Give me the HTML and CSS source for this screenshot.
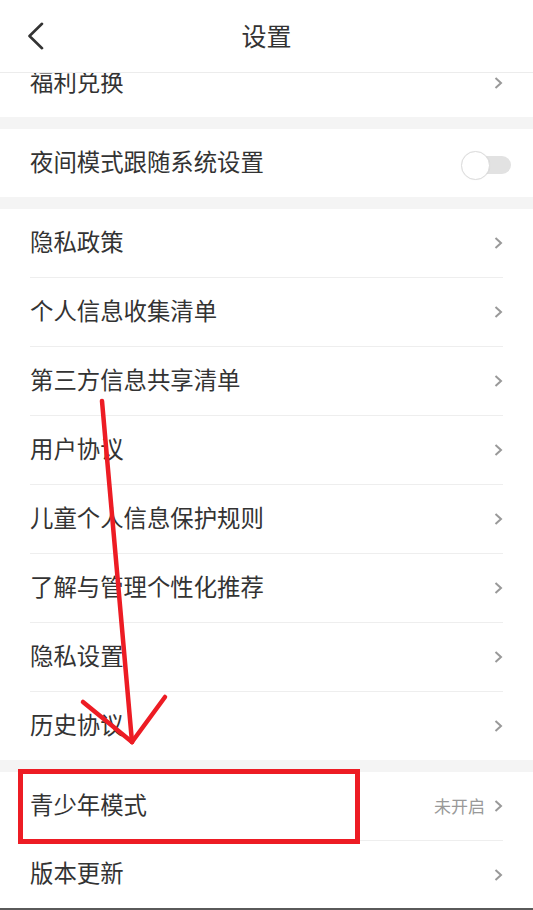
FILE: index.html
```html
<!DOCTYPE html>
<html lang="zh-CN">
<head>
<meta charset="utf-8">
<title>设置</title>
<link rel="stylesheet" href="styles.css">
</head>
<body>
<div class="screen">
  <header class="topbar">
    <svg class="back" width="18" height="28" viewBox="0 0 18 28"><polyline points="15,1.8 2.5,14 15,26.2" fill="none" stroke="#333" stroke-width="2.6" stroke-linecap="round" stroke-linejoin="round"/></svg>
    <h1 class="title">设置</h1>
  </header>

  <main class="content">
    <section class="group">
      <div class="row"><span class="label">福利兑换</span><span class="chev"><svg width="9" height="12" viewBox="0 0 9 12"><polyline points="1.5,1 7,6 1.5,11" fill="none" stroke="#999" stroke-width="2"/></svg></span></div>
    </section>

    <section class="group">
      <div class="row"><span class="label">夜间模式跟随系统设置</span><span class="switch"><span class="knob"></span></span></div>
    </section>

    <section class="group">
      <div class="row"><span class="label">隐私政策</span><span class="chev"><svg width="9" height="12" viewBox="0 0 9 12"><polyline points="1.5,1 7,6 1.5,11" fill="none" stroke="#999" stroke-width="2"/></svg></span></div>
      <div class="row"><span class="label">个人信息收集清单</span><span class="chev"><svg width="9" height="12" viewBox="0 0 9 12"><polyline points="1.5,1 7,6 1.5,11" fill="none" stroke="#999" stroke-width="2"/></svg></span></div>
      <div class="row"><span class="label">第三方信息共享清单</span><span class="chev"><svg width="9" height="12" viewBox="0 0 9 12"><polyline points="1.5,1 7,6 1.5,11" fill="none" stroke="#999" stroke-width="2"/></svg></span></div>
      <div class="row"><span class="label">用户协议</span><span class="chev"><svg width="9" height="12" viewBox="0 0 9 12"><polyline points="1.5,1 7,6 1.5,11" fill="none" stroke="#999" stroke-width="2"/></svg></span></div>
      <div class="row"><span class="label">儿童个人信息保护规则</span><span class="chev"><svg width="9" height="12" viewBox="0 0 9 12"><polyline points="1.5,1 7,6 1.5,11" fill="none" stroke="#999" stroke-width="2"/></svg></span></div>
      <div class="row"><span class="label">了解与管理个性化推荐</span><span class="chev"><svg width="9" height="12" viewBox="0 0 9 12"><polyline points="1.5,1 7,6 1.5,11" fill="none" stroke="#999" stroke-width="2"/></svg></span></div>
      <div class="row"><span class="label">隐私设置</span><span class="chev"><svg width="9" height="12" viewBox="0 0 9 12"><polyline points="1.5,1 7,6 1.5,11" fill="none" stroke="#999" stroke-width="2"/></svg></span></div>
      <div class="row"><span class="label">历史协议</span><span class="chev"><svg width="9" height="12" viewBox="0 0 9 12"><polyline points="1.5,1 7,6 1.5,11" fill="none" stroke="#999" stroke-width="2"/></svg></span></div>
    </section>

    <section class="group">
      <div class="row"><span class="label">青少年模式</span><span class="value">未开启</span><span class="chev"><svg width="9" height="12" viewBox="0 0 9 12"><polyline points="1.5,1 7,6 1.5,11" fill="none" stroke="#999" stroke-width="2"/></svg></span></div>
      <div class="row row-last"><span class="label">版本更新</span><span class="chev"><svg width="9" height="12" viewBox="0 0 9 12"><polyline points="1.5,1 7,6 1.5,11" fill="none" stroke="#999" stroke-width="2"/></svg></span></div>
    </section>
  </main>
  <div class="bottom-strip"></div>

  <svg class="annotation" width="533" height="910" viewBox="0 0 533 910">
    <g fill="none" stroke="#ed1c24" stroke-width="4.5" stroke-linecap="round">
      <line x1="102" y1="401" x2="132" y2="742"/>
      <line x1="83" y1="702" x2="132" y2="742"/>
      <line x1="165" y1="697" x2="132" y2="742"/>
    </g>
    <rect x="20.5" y="771.5" width="337" height="70" fill="none" stroke="#ed1c24" stroke-width="5"/>
  </svg>
</div>
</body>
</html>
```

FILE: styles.css
```css
html, body {
  margin: 0;
  padding: 0;
  background: #f4f4f4;
}

.screen {
  position: relative;
  width: 533px;
  height: 910px;
  overflow: hidden;
  background: #f4f4f4;
  font-family: "Noto Sans CJK SC", "Noto Sans", sans-serif;
  color: #333;
}

.topbar {
  position: absolute;
  top: 0;
  left: 0;
  right: 0;
  z-index: 2;
  height: 72px;
  border-bottom: 1px solid #ececec;
  background: #fff;
  display: flex;
  align-items: center;
  justify-content: center;
}

.back {
  position: absolute;
  left: 27px;
  top: 22px;
}

.title {
  margin: 0 0 2px;
  font-size: 25px;
  font-weight: normal;
  line-height: 1;
  color: #333;
}

.content {
  padding-top: 49px;
  display: flex;
  flex-direction: column;
  gap: 12px;
}

.group {
  background: #fff;
  display: flex;
  flex-direction: column;
}

.row {
  height: 68px;
  margin: 0 30px;
  display: flex;
  align-items: center;
}

.row + .row {
  border-top: 1px solid #eeeeee;
}

.row-last {
  height: 67px;
}

.label {
  flex: 1;
  font-size: 23.4px;
  line-height: 1;
  margin-bottom: 3px;
  color: #333;
}

.value {
  font-size: 17px;
  color: #999;
  margin-right: 9px;
  margin-bottom: 2px;
  line-height: 1;
}

.chev {
  display: flex;
  align-items: center;
  width: 9px;
  height: 12px;
}

.chev svg {
  display: block;
}

.switch {
  position: relative;
  width: 50px;
  height: 29px;
  margin-right: -8px;
  margin-top: 4px;
}

.switch::before {
  content: "";
  position: absolute;
  left: 5px;
  top: 5.5px;
  width: 45px;
  height: 18px;
  border-radius: 9px;
  background: #e2e2e2;
}

.knob {
  position: absolute;
  left: 0;
  top: 0;
  width: 27px;
  height: 27px;
  border-radius: 50%;
  background: #fff;
  border: 1px solid #dcdcdc;
  box-shadow: 0 0 1px rgba(0,0,0,0.08);
}

.bottom-strip {
  height: 2px;
  background: #5a5a5a;
}

.annotation {
  position: absolute;
  top: 0;
  left: 0;
  z-index: 3;
  pointer-events: none;
}
```
